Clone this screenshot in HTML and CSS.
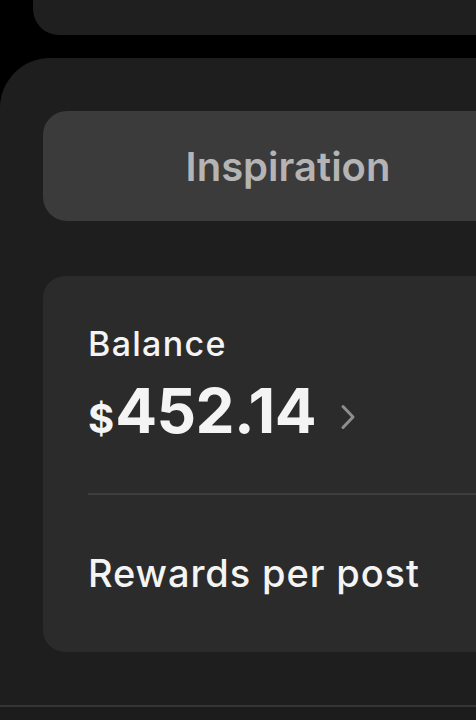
FILE: index.html
```html
<!DOCTYPE html>
<html lang="en">
<head>
<meta charset="utf-8">
<link rel="stylesheet" href="styles.css">
</head>
<body>
<div class="screen">
  <div class="top-card"></div>
  <div class="panel">
    <div class="inspiration">Inspiration</div>
    <div class="balance-card">
      <div class="balance-label">Balance</div>
      <div class="balance-row">
        <span class="amount"><span class="currency">$</span>452.14</span>
        <svg class="chevron" width="16" height="26" viewBox="0 0 16 26" aria-hidden="true">
          <path d="M3 2.5 L13 13 L3 23.5" fill="none" stroke="#8e8e8e" stroke-width="3" stroke-linecap="round" stroke-linejoin="round"/>
        </svg>
      </div>
      <div class="divider"></div>
      <div class="rewards">Rewards per post</div>
    </div>
  </div>
  <div class="tab-bar"></div>
</div>
</body>
</html>
```
FILE: styles.css
```css
* { box-sizing: border-box; }
html, body {
  margin: 0;
  padding: 0;
  background: #000;
  overflow: hidden;
}
body {
  font-family: Inter, "Noto Sans", "Liberation Sans", sans-serif;
  -webkit-font-smoothing: antialiased;
}
.screen {
  width: 476px;
  height: 720px;
  display: flex;
  flex-direction: column;
  overflow: hidden;
}
.top-card {
  flex: none;
  height: 35px;
  margin-left: 33px;
  background: #1f1f1f;
  border-bottom-left-radius: 26px;
}
.panel {
  flex: none;
  margin-top: 23px;
  height: 647px;
  background: #1e1e1e;
  border-top-left-radius: 50px;
  padding: 53px 0 0 43px;
  display: flex;
  flex-direction: column;
}
.inspiration {
  flex: none;
  width: 490px;
  height: 110px;
  background: #3b3b3b;
  border-radius: 24px;
  display: flex;
  align-items: center;
  justify-content: center;
  color: #b4b4b4;
  font-size: 40px;
  font-weight: 600;
}
.balance-card {
  flex: none;
  margin-top: 55px;
  width: 520px;
  height: 376px;
  background: #2b2b2b;
  border-radius: 22px;
  padding: 48px 0 0 45px;
  display: flex;
  flex-direction: column;
  color: #f4f4f4;
}
.balance-label {
  font-size: 34px;
  font-weight: 500;
  line-height: 40px;
  letter-spacing: 1.3px;
}
.balance-row {
  display: flex;
  align-items: center;
  gap: 24px;
  margin-top: 19px;
  height: 64px;
}
.amount {
  font-size: 62px;
  font-weight: 700;
  line-height: 64px;
  letter-spacing: -0.6px;
}
.currency {
  font-size: 40px;
  letter-spacing: 0;
  margin-right: 1px;
}
.chevron {
  flex: none;
  margin-top: 4px;
}
.divider {
  margin-top: 46px;
  height: 2px;
  background: #3e3e3e;
}
.rewards {
  margin-top: 56px;
  font-size: 38px;
  font-weight: 500;
  line-height: 44px;
  letter-spacing: 0.9px;
}
.tab-bar {
  flex: none;
  height: 15px;
  background: #1c1c1c;
  border-top: 2px solid #353535;
}
```
